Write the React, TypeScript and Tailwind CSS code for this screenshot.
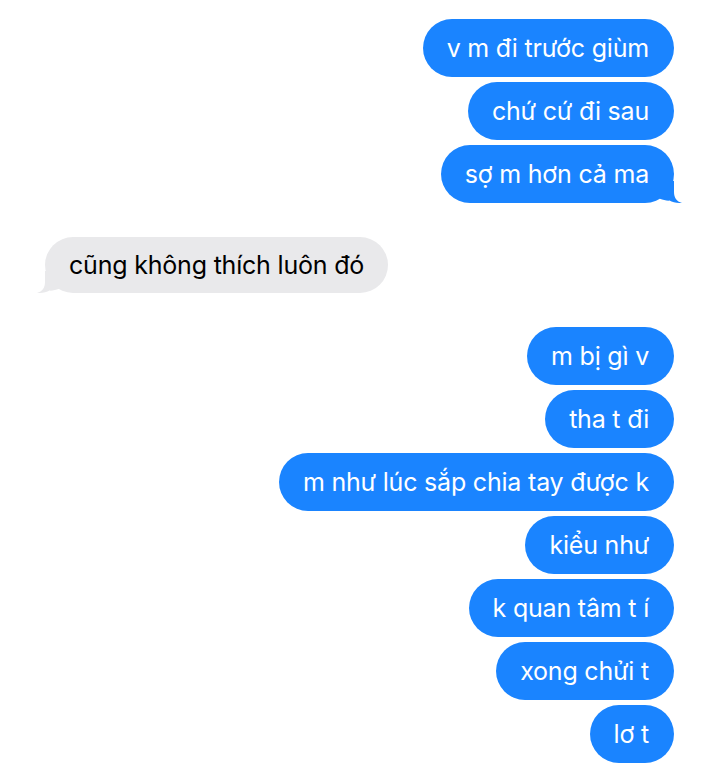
import React from "react";

const BLUE = "bg-[#1a84ff]";

function Tail({ side }: { side: "right" | "left" }) {
  const color = side === "right" ? "#1a84ff" : "#e9e9eb";
  return (
    <svg
      width="22"
      height="22"
      viewBox="0 0 22 22"
      className={
        side === "right"
          ? "absolute right-[-8px] bottom-0"
          : "absolute left-[-8px] bottom-0 -scale-x-100"
      }
    >
      <path
        d="M0 0 H14 V11 C14 16.5 16.5 20.5 22 22 C17 22.2 12.5 21.2 9.5 19.6 C6.5 19.8 3 19 0 17.8 Z"
        fill={color}
      />
    </svg>
  );
}

function Out({ text, tail }: { text: string; tail?: boolean }) {
  return (
    <div className="flex justify-end pr-[46px]">
      <div
        className={`relative ${BLUE} text-white h-[58px] rounded-[29px] pl-6 pr-[25px] flex items-center text-[25px] leading-none tracking-[-0.2px]`}
      >
        <span className="relative z-10">{text}</span>
        {tail && <Tail side="right" />}
      </div>
    </div>
  );
}

export default function App() {
  return (
    <div
      className="w-[720px] h-[764px] bg-white overflow-hidden"
      style={{ fontFamily: "Inter, 'Noto Sans', sans-serif" }}
    >
      <div className="pt-[19px] flex flex-col gap-[5px]">
        <Out text="v m đi trước giùm" />
        <Out text="chứ cứ đi sau" />
        <Out text="sợ m hơn cả ma" tail />
      </div>
      <div className="mt-[34px] pl-[45px] flex">
        <div className="relative bg-[#e9e9eb] text-black h-[56px] rounded-[28px] px-[24px] flex items-center text-[25px] leading-none tracking-[-0.2px]">
          <span className="relative z-10">cũng không thích luôn đó</span>
          <Tail side="left" />
        </div>
      </div>
      <div className="mt-[34px] flex flex-col gap-[5px]">
        <Out text="m bị gì v" />
        <Out text="tha t đi" />
        <Out text="m như lúc sắp chia tay được k" />
        <Out text="kiểu như" />
        <Out text="k quan tâm t í" />
        <Out text="xong chửi t" />
        <Out text="lơ t" />
      </div>
    </div>
  );
}
